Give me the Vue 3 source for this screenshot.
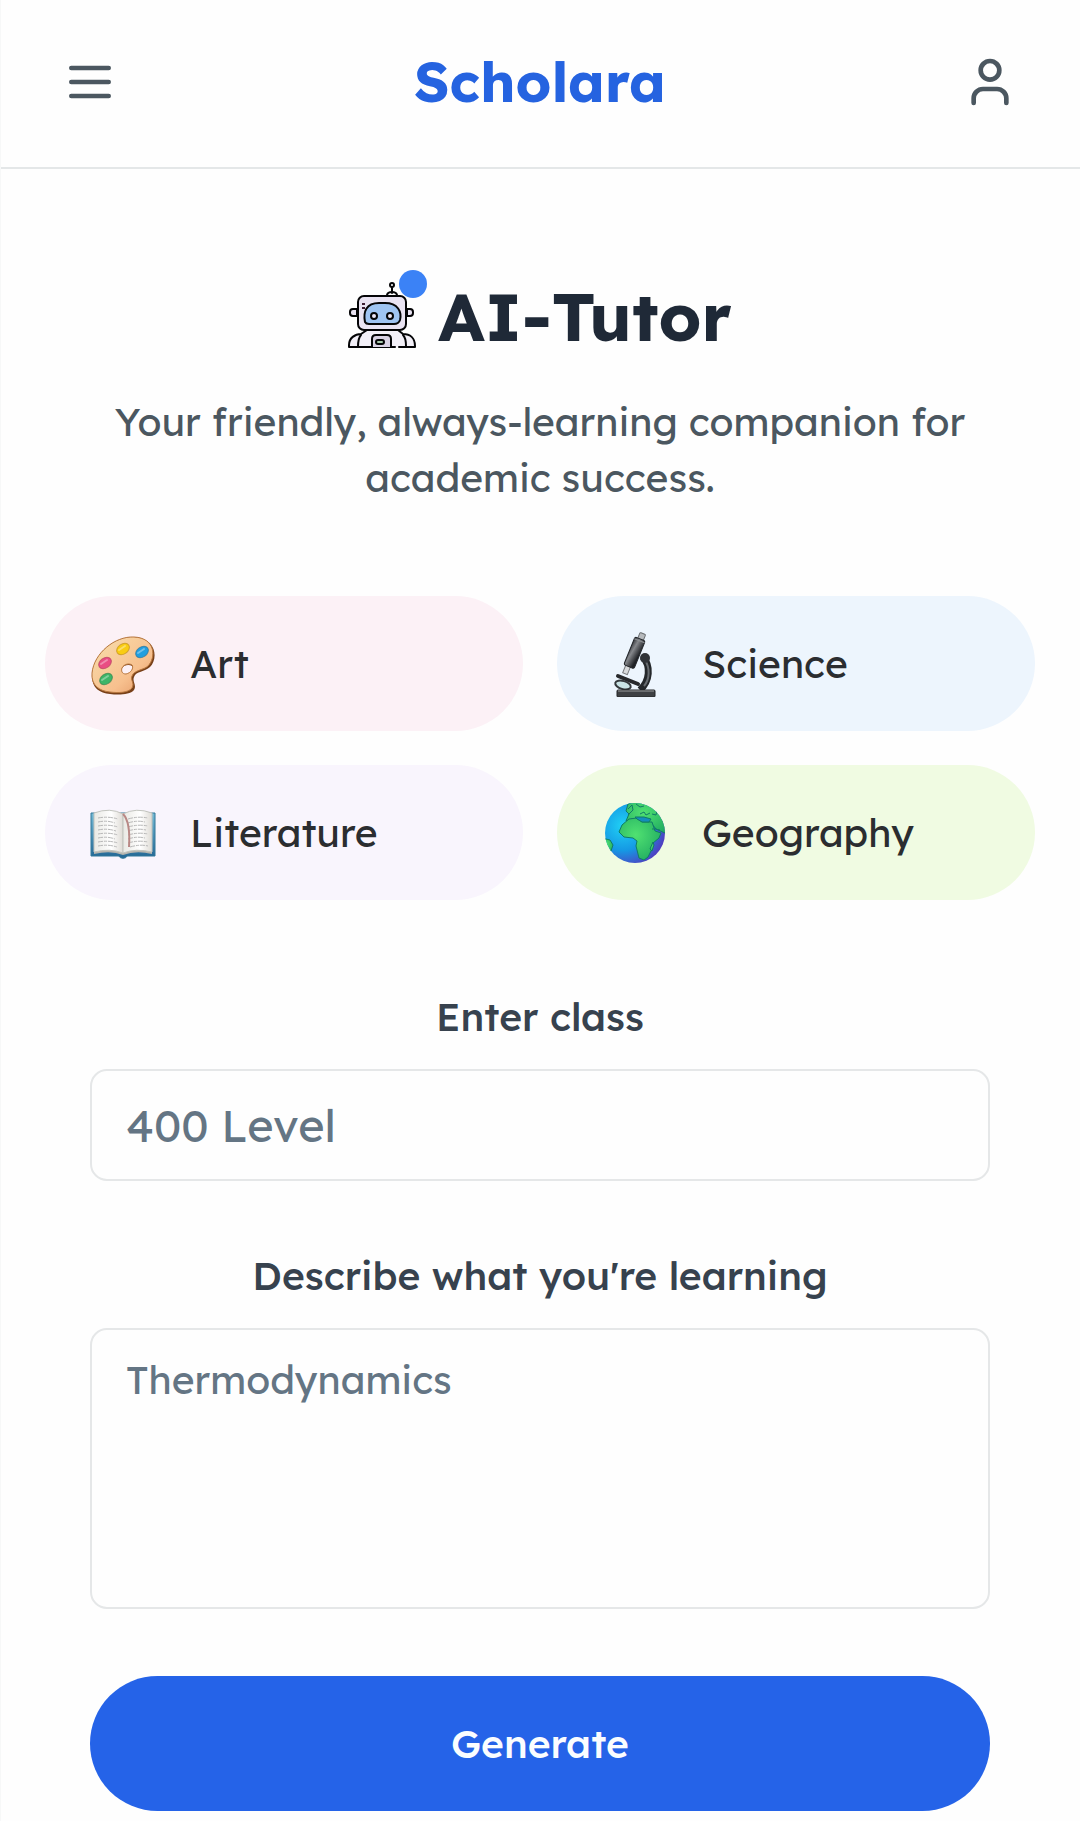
<script setup>
import { ref } from 'vue'

const subjects = [
  { id: 'art', name: 'Art' },
  { id: 'science', name: 'Science' },
  { id: 'literature', name: 'Literature' },
  { id: 'geography', name: 'Geography' }
]

const level = ref('')
const topic = ref('')
</script>

<template>
  <div class="page">
    <header class="topbar">
      <button class="icon-button" type="button" aria-label="Open menu">
        <svg class="icon" viewBox="0 0 24 24" aria-hidden="true">
          <path d="M4 6h16M4 12h16M4 18h16" />
        </svg>
      </button>
      <a class="brand" href="#">Scholara</a>
      <button class="icon-button" type="button" aria-label="Account">
        <svg class="icon" viewBox="0 0 24 24" aria-hidden="true">
          <circle cx="12" cy="7" r="4" />
          <path d="M19 21v-2a4 4 0 0 0-4-4H9a4 4 0 0 0-4 4v2" />
        </svg>
      </button>
    </header>

    <main class="content">
      <section class="intro">
        <div class="headline">
          <span class="mascot">
            <svg class="robot" viewBox="0 0 68 68" aria-hidden="true">
              <g fill="#e9e3f2" stroke="#050507" stroke-width="2" stroke-linecap="round" stroke-linejoin="round">
                <path d="M39 13c1-4 9-4 10 0" fill="#fff" />
                <path d="M44 6v5" />
                <circle cx="44" cy="3" r="2" fill="#fff" />
                <path d="M9 27H5a3 3 0 0 0-3 3v1a3 3 0 0 0 3 3h4zM59 27h3a3 3 0 0 1 3 3v1a3 3 0 0 1-3 3h-3z" />
                <path d="M1 65v-2c0-7 6-11 12-11l6-4h31l5 4c7 0 12 4 12 12v1H51M1 65h46" fill="#f3f0f8" />
                <path d="M13 53c-3 3-3 7-3 12M55 53c3 3 3 7 3 11" fill="none" />
                <rect x="10" y="14" width="48" height="34" rx="6" />
                <path d="M17 40c-2-10 1-19 14-19h6c13 0 17 9 15 17-1 3-3 4-6 4H21c-2 0-3 0-4-2z" fill="#9fc4f2" />
                <circle cx="26" cy="34" r="3" fill="#eee8f8" />
                <circle cx="42" cy="34" r="3" fill="#eee8f8" />
                <path d="M24 65V57q0-4 4-4h11q4 0 4 4v8" fill="#d9d2e4" />
                <rect x="28" y="58" width="8" height="4" rx="2" fill="#a9c9ad" />
              </g>
              <path d="M14 21h3v2h-3zM14 25h3v2h-3z" fill="#3c1d32" />
            </svg>
            <span class="status-dot"></span>
          </span>
          <h1>AI-Tutor</h1>
        </div>
        <p class="tagline">Your friendly, always-learning companion for academic success.</p>
      </section>

      <nav class="subjects" aria-label="Subjects">
        <button v-for="s in subjects" :key="s.id" type="button" class="subject" :class="s.id">
          <svg v-if="s.id === 'art'" class="picture" viewBox="0 -2 66 66" aria-hidden="true">
            <defs>
              <linearGradient id="wood" x1="0" y1="0" x2="1" y2="1">
                <stop offset="0" stop-color="#f8dfad" />
                <stop offset=".65" stop-color="#f7c08e" />
                <stop offset="1" stop-color="#e39562" />
              </linearGradient>
            </defs>
            <path d="M45 4C25 3 4 20 2 41c-1 13 7 19 18 20 8 1 20 1 24-4 3-5-2-8 0-13 2-6 11-5 16-10C68 26 67 6 45 4zM36 42c-4 0-6-3-4-7 2-3 7-4 10-2 2 3-1 8-6 9z" fill="#784018" />
            <path d="M44 4C25 3 4 20 2 40c-1 12 7 18 18 19 8 1 18 1 22-4 3-5-2-8 0-12 2-6 12-6 16-10C66 25 66 5 44 4zM36 41c-4 0-5-3-4-6 2-4 7-5 10-3 2 3-1 8-6 9z" fill="url(#wood)" stroke="#b9783f" />
            <g stroke-width="1" stroke-opacity=".6">
              <ellipse cx="33" cy="16" rx="7" ry="5" transform="rotate(-35 33 16)" fill="#f9cc13" stroke="#b8850d" />
              <ellipse cx="52" cy="19" rx="7" ry="5" transform="rotate(-35 52 19)" fill="#239fdf" stroke="#176894" />
              <ellipse cx="15" cy="30" rx="7" ry="5" transform="rotate(-35 15 30)" fill="#e94d83" stroke="#ae3257" />
              <ellipse cx="16" cy="46" rx="7" ry="5" transform="rotate(-35 16 46)" fill="#3db568" stroke="#277844" />
            </g>
            <path d="M29 17l6-4M48 20l6-4M11 31l6-4M12 47l6-4" stroke="#fff" stroke-opacity=".35" stroke-width="2" stroke-linecap="round" />
          </svg>

          <svg v-else-if="s.id === 'science'" class="picture" viewBox="2 0 66 66" aria-hidden="true">
            <defs>
              <linearGradient id="tube" x1="0" x2="1" y1="0" y2=".4">
                <stop offset="0" stop-color="#34363a" />
                <stop offset=".4" stop-color="#85878b" />
                <stop offset="1" stop-color="#202226" />
              </linearGradient>
            </defs>
            <path d="M43 26c8 9 7 24-3 33" fill="none" stroke="#24272a" stroke-width="7" />
            <path d="M45 29c5 8 5 19-1 26" fill="none" stroke="#676b6f" stroke-width="2" />
            <g transform="rotate(22 35 22)">
              <rect x="32" y="1" width="6" height="9" rx="1" fill="#b6b9bc" stroke="#696d70" />
              <rect x="31" y="36" width="5" height="9" fill="#d8dadc" stroke="#77797c" />
              <rect x="29" y="7" width="11" height="30" rx="2" fill="url(#tube)" stroke="#222529" />
              <path d="M29 9h11" stroke="#8d9093" stroke-width="1" />
            </g>
            <circle cx="45" cy="27" r="5" fill="#303337" />
            <path d="M18 45l20 8" stroke="#27292c" stroke-width="4" stroke-linecap="round" />
            <ellipse cx="23" cy="54" rx="8" ry="4" transform="rotate(16 23 54)" fill="#c9e3e5" stroke="#34383b" stroke-width="2" />
            <rect x="17" y="59" width="38" height="7" rx="1" fill="#3e4043" stroke="#222427" />
            <path d="M18 60h36" stroke="#9a9b9d" />
          </svg>

          <svg v-else-if="s.id === 'literature'" class="picture" viewBox="0 -1 66 66" aria-hidden="true">
            <defs>
              <linearGradient id="cover" x1="0" y1="0" x2="0" y2="1">
                <stop offset="0" stop-color="#75bbd7" />
                <stop offset="1" stop-color="#226694" />
              </linearGradient>
              <linearGradient id="sheet" x1="0" x2="1">
                <stop offset="0" stop-color="#e9e9e4" />
                <stop offset=".6" stop-color="#fff" />
                <stop offset="1" stop-color="#dedbd5" />
              </linearGradient>
            </defs>
            <path d="M1 12h64v43H37c-1 3-7 3-8 0H1z" fill="url(#cover)" stroke="#327899" />
            <path d="M4 53q17-4 29 1 13-5 29-1V12H4z" fill="#b5b4ae" />
            <path d="M4 12Q20 6 33 13v39Q20 47 4 51z" fill="url(#sheet)" stroke="#c2c4be" />
            <path d="M33 13q13-7 29-1v39q-16-4-29 1z" fill="url(#sheet)" stroke="#c2c4be" />
            <g fill="none" stroke="#b7b7b7" stroke-width="1" stroke-dasharray="5 1 3 1">
              <path d="M8 17q10-2 20 1M8 21q9-2 17 1M8 25q10-2 20 1M8 29q9-2 18 1M8 33q10-2 20 1M8 37q9-2 17 1M8 41q10-2 20 1M8 45q10-2 19 1" />
              <path d="M38 18q10-3 20-1M38 22q9-3 17-1M38 26q10-3 20-1M38 30q9-3 18-1M38 34q10-3 20-1M38 38q9-3 17-1M38 42q10-3 20-1M40 46q10-3 18-1" />
            </g>
            <path d="M33 13c6 6 7 17 6 33" fill="none" stroke="#b98885" stroke-width="2" />
          </svg>

          <svg v-else class="picture" viewBox="0 0 66 66" aria-hidden="true">
            <defs>
              <radialGradient id="sea" cx=".3" cy=".38" r=".75">
                <stop offset="0" stop-color="#20d2f5" />
                <stop offset=".55" stop-color="#1598e4" />
                <stop offset="1" stop-color="#5436be" />
              </radialGradient>
              <radialGradient id="land" cx=".4" cy=".4" r=".7">
                <stop offset="0" stop-color="#50e171" />
                <stop offset="1" stop-color="#21ac61" />
              </radialGradient>
              <clipPath id="globe"><circle cx="33" cy="33" r="30" /></clipPath>
            </defs>
            <circle cx="33" cy="33" r="30" fill="url(#sea)" />
            <g clip-path="url(#globe)" fill="url(#land)" stroke="#107c66" stroke-width="1">
              <path d="M26 4l-2 7 3 3-3 7 6-2 9 3 11 2 4 5 9 4 4-4-4-14-14-14-10-2z" />
              <path d="M27 19l8-1 5 4 10 0 3 9 6 2-2 5-6 5-1 6-4 8-4 3-5-2-3-12 1-5-4-3-9-1-5-5 3-7z" />
              <path d="M26 9l4-4 1 5-5 5M34 4l4 3 4-1M38 14l4-2 2 3 4-2M50 14l4 1 1-4" fill="none" />
              <path d="M33 17l5 0 4 0 7 2-2 3-7 0-5-3z" fill="#148dbc" />
              <path d="M0 38l8 2 3 5-2 6-6 2z" />
              <path d="M51 42l-3 7 2 2 2-6z" />
              <path d="M50 29l3 0 5 1" fill="none" />
            </g>
          </svg>
          <span>{{ s.name }}</span>
        </button>
      </nav>

      <form class="request" @submit.prevent>
        <div class="field">
          <label for="level">Enter class</label>
          <input id="level" v-model="level" type="text" placeholder="400 Level" />
        </div>
        <div class="field">
          <label for="topic">Describe what you're learning</label>
          <textarea id="topic" v-model="topic" placeholder="Thermodynamics"></textarea>
        </div>
        <button class="generate" type="submit">Generate</button>
      </form>
    </main>
  </div>
</template>

<style>
body {
  margin: 0;
  background: #fefefe;
}
</style>

<style scoped>
.page,
.page * {
  box-sizing: border-box;
}

.page {
  border-left: 1px solid #f7f8f8;
  font-family: Lexend, Inter, "Open Sans", sans-serif;
  font-size: 39px;
  line-height: 56px;
  color: #4b5760;
}

button,
input,
textarea {
  font: inherit;
}

.topbar {
  display: flex;
  align-items: center;
  justify-content: space-between;
  padding: 37px 45px 40px 44px;
  border-bottom: 2px solid #e4e7e8;
}

.icon-button {
  display: flex;
  padding: 17px;
  border: 0;
  background: none;
  color: #4b5760;
}

.icon {
  width: 56px;
  height: 56px;
  fill: none;
  stroke: currentColor;
  stroke-width: 2;
  stroke-linecap: round;
  stroke-linejoin: round;
}

.brand {
  padding-bottom: 2px;
  font-size: 56px;
  font-weight: 700;
  color: #2563e0;
  text-decoration: none;
}

.content {
  padding: 102px 45px 10px 44px;
}

.intro {
  text-align: center;
}

.headline {
  display: flex;
  align-items: center;
  justify-content: center;
  gap: 22px;
}

.mascot {
  position: relative;
  display: flex;
}

.robot {
  width: 68px;
  height: 68px;
}

.status-dot {
  position: absolute;
  top: -12px;
  right: -11px;
  width: 28px;
  height: 28px;
  border-radius: 50%;
  background: #3b82f6;
}

h1 {
  margin: 0;
  font-size: 67px;
  line-height: 90px;
  font-weight: 700;
  color: #1f2937;
}

.tagline {
  margin: 33px 45px 0;
}

.subjects {
  display: grid;
  grid-template-columns: 1fr 1fr;
  gap: 34px;
  margin-top: 90px;
}

.subject {
  display: flex;
  align-items: center;
  gap: 34px;
  height: 135px;
  padding: 0 45px;
  border: 0;
  border-radius: 68px;
  color: #2b2d30;
}

.picture {
  width: 66px;
  height: 66px;
}

.art {
  background: #fcf1f6;
}

.science {
  background: #edf5fd;
}

.literature {
  background: #f9f5fd;
}

.geography {
  background: #f0fbe2;
}

.request {
  display: flex;
  flex-direction: column;
  gap: 67px;
  margin: 89px 45px 0;
}

.field {
  display: flex;
  flex-direction: column;
  gap: 24px;
}

label {
  font-weight: 500;
  text-align: center;
  color: #37424e;
}

input,
textarea {
  display: block;
  width: 100%;
  border: 2px solid #e5e7e8;
  border-radius: 17px;
  background: #fefefe;
  color: #374151;
}

input {
  height: 112px;
  padding: 0 34px;
  font-size: 45px;
}

textarea {
  height: 281px;
  padding: 22px 34px;
  resize: none;
}

input::placeholder,
textarea::placeholder {
  color: #647584;
  opacity: 1;
}

.generate {
  height: 135px;
  border: 0;
  border-radius: 68px;
  background: #2563e8;
  color: #fafdff;
  font-weight: 500;
}
</style>
